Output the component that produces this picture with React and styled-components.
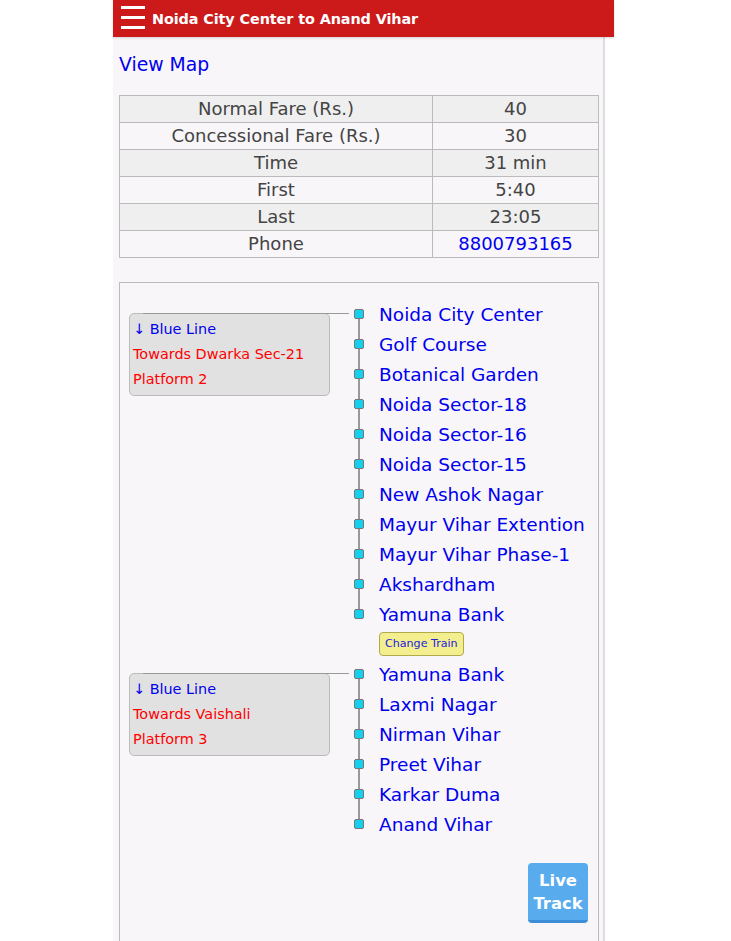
import React from 'react';
import styled, { createGlobalStyle } from 'styled-components';

const GlobalStyle = createGlobalStyle`
  html, body {
    margin: 0;
    padding: 0;
    background: #ffffff;
  }
  body {
    font-family: "DejaVu Sans", Verdana, sans-serif;
  }
`;

const Page = styled.div`
  width: 501px;
  margin-left: 113px;
  min-height: 941px;
`;

const Header = styled.header`
  height: 37px;
  background: #cc1a1a;
  display: flex;
  align-items: center;
  padding-left: 8px;
  box-shadow: 0 1px 2px rgba(0, 0, 0, 0.15);
  position: relative;
  z-index: 1;
`;

const Burger = styled.div`
  width: 24px;
  height: 23px;
  display: flex;
  flex-direction: column;
  justify-content: space-between;
  margin-right: 7px;
  margin-top: -2px;

  span {
    display: block;
    height: 3px;
    background: #ffffff;
  }
`;

const Title = styled.h1`
  margin: 0;
  color: #ffffff;
  font-size: 14.4px;
  font-weight: 700;
  letter-spacing: -0.1px;
`;

const Content = styled.main`
  width: 480px;
  min-height: 904px;
  background: #f8f6f8;
  border-right: 2px solid #dddddd;
  padding: 15px 4px 0 6px;
`;

const MapLink = styled.a`
  display: block;
  color: #0000ee;
  font-size: 18.8px;
  line-height: 26px;
  text-decoration: none;
`;

const FareTable = styled.table`
  width: 480px;
  margin-top: 17px;
  border-collapse: collapse;
  color: #444444;
  font-size: 18px;

  td {
    border: 1px solid #bbbbbb;
    height: 26px;
    padding: 0;
    text-align: center;
    line-height: 26px;
  }
  td:first-child {
    width: 312px;
  }
  tr:nth-child(odd) td {
    background: #efefef;
  }
`;

const Phone = styled.a`
  color: #0000ee;
  text-decoration: none;
`;

const RouteCard = styled.section`
  margin-top: 24px;
  border: 1px solid #bbbbbb;
  border-bottom: none;
  padding: 16px 10px 40px 9px;
  display: flex;
  flex-direction: column;
`;

const Leg = styled.div`
  display: flex;
  align-items: flex-start;
`;

const LineBox = styled.div`
  position: relative;
  width: 193px;
  margin-top: 14px;
  padding: 3px 3px;
  background: #e1e1e1;
  border: 1px solid #bbbbbb;
  border-radius: 5px;
  font-size: 14.4px;
  line-height: 25px;

  &::before {
    content: '';
    position: absolute;
    top: -1px;
    left: 13px;
    right: -20px;
    height: 1px;
    background: #999999;
  }
`;

const BoxLine = styled.div`
  color: ${p => (p.$accent ? '#0000ee' : '#ff0000')};
  white-space: nowrap;
`;

const Stops = styled.div`
  margin-left: 24px;
  display: flex;
  flex-direction: column;
`;

const StationList = styled.ul`
  position: relative;
  list-style: none;
  margin: 0;
  padding: 0;

  &::before {
    content: '';
    position: absolute;
    left: 4px;
    top: 15px;
    bottom: 15px;
    width: 1.5px;
    background: #999999;
  }
`;

const Station = styled.li`
  position: relative;
  height: 30px;
  display: flex;
  align-items: center;
`;

const Dot = styled.span`
  width: 8px;
  height: 8px;
  background: #14d0ee;
  border: 1px solid #777777;
  border-radius: 2px;
  flex: none;
  margin-right: 15px;
  position: relative;
`;

const StationName = styled.a`
  color: #0000ee;
  font-size: 18.5px;
  text-decoration: none;
  white-space: nowrap;
`;

const TransferRow = styled.div`
  height: 30px;
  display: flex;
  align-items: center;
  padding-left: 25px;
`;

const ChangeTrain = styled.span`
  display: inline-block;
  height: 22px;
  line-height: 22px;
  padding: 0 5px;
  background: #f4ef8e;
  border: 1px solid #b1aa4a;
  border-radius: 4px;
  color: #2222dd;
  font-size: 11.1px;
`;

const Footer = styled.div`
  display: flex;
  justify-content: flex-end;
  margin-top: 24px;
`;

const LiveTrack = styled.button`
  width: 60px;
  height: 60px;
  padding: 0;
  background: #58acee;
  border: none;
  border-bottom: 3px solid #3d8ed6;
  border-radius: 4px;
  color: #ffffff;
  font-family: "DejaVu Sans", Verdana, sans-serif;
  font-size: 16.4px;
  font-weight: 700;
  line-height: 23px;
`;

const fares = [
  ['Normal Fare (Rs.)', '40'],
  ['Concessional Fare (Rs.)', '30'],
  ['Time', '31 min'],
  ['First', '5:40'],
  ['Last', '23:05'],
  ['Phone', '8800793165'],
];

const legs = [
  {
    towards: 'Towards Dwarka Sec-21',
    platform: 'Platform 2',
    stations: [
      'Noida City Center',
      'Golf Course',
      'Botanical Garden',
      'Noida Sector-18',
      'Noida Sector-16',
      'Noida Sector-15',
      'New Ashok Nagar',
      'Mayur Vihar Extention',
      'Mayur Vihar Phase-1',
      'Akshardham',
      'Yamuna Bank',
    ],
    change: true,
  },
  {
    towards: 'Towards Vaishali',
    platform: 'Platform 3',
    stations: [
      'Yamuna Bank',
      'Laxmi Nagar',
      'Nirman Vihar',
      'Preet Vihar',
      'Karkar Duma',
      'Anand Vihar',
    ],
    change: false,
  },
];

export default function App() {
  return (
    <>
      <GlobalStyle />
      <Page>
        <Header>
          <Burger>
            <span />
            <span />
            <span />
          </Burger>
          <Title>Noida City Center to Anand Vihar</Title>
        </Header>
        <Content>
          <MapLink href="#">View Map</MapLink>
          <FareTable>
            <tbody>
              {fares.map(([label, value]) => (
                <tr key={label}>
                  <td>{label}</td>
                  <td>{label === 'Phone' ? <Phone href="#">{value}</Phone> : value}</td>
                </tr>
              ))}
            </tbody>
          </FareTable>
          <RouteCard>
            {legs.map(leg => (
              <Leg key={leg.towards}>
                <LineBox>
                  <BoxLine $accent>↓ Blue Line</BoxLine>
                  <BoxLine>{leg.towards}</BoxLine>
                  <BoxLine>{leg.platform}</BoxLine>
                </LineBox>
                <Stops>
                  <StationList>
                    {leg.stations.map(name => (
                      <Station key={name}>
                        <Dot />
                        <StationName href="#">{name}</StationName>
                      </Station>
                    ))}
                  </StationList>
                  {leg.change && (
                    <TransferRow>
                      <ChangeTrain>Change Train</ChangeTrain>
                    </TransferRow>
                  )}
                </Stops>
              </Leg>
            ))}
            <Footer>
              <LiveTrack>
                Live
                <br />
                Track
              </LiveTrack>
            </Footer>
          </RouteCard>
        </Content>
      </Page>
    </>
  );
}
